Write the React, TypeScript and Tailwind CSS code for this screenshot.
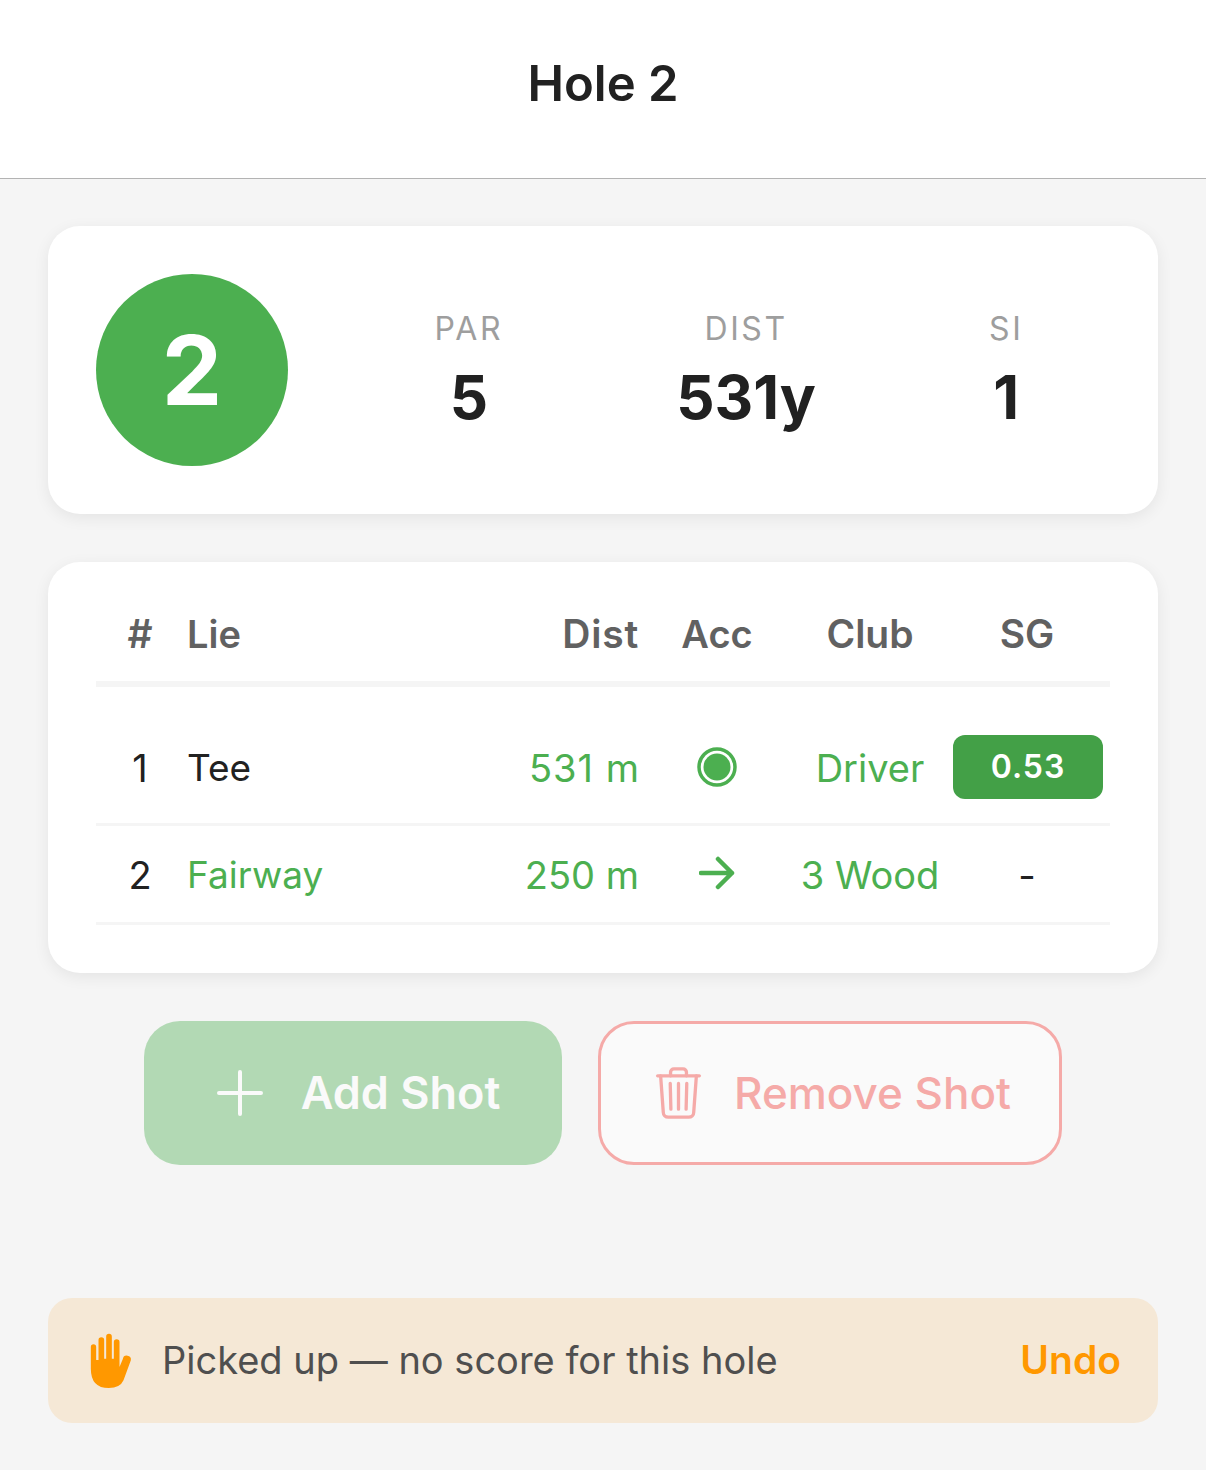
const rowClass = "grid grid-cols-[91px_1fr_90px_152px_160px_160px] items-center";

function TargetIcon() {
  return (
    <svg width="40" height="40" viewBox="0 0 40 40" fill="none" className="mx-auto">
      <circle cx="20" cy="20" r="18" stroke="#4caf50" strokeWidth="3.5" />
      <circle cx="20" cy="20" r="13.5" fill="#4caf50" />
    </svg>
  );
}

function ArrowIcon() {
  return (
    <svg width="36" height="34" viewBox="0 0 36 34" fill="none" className="mx-auto -mt-[5px]">
      <path
        d="M2 17H33M19 3l14 14-14 14"
        stroke="#4caf50"
        strokeWidth="4.5"
        strokeLinecap="round"
        strokeLinejoin="round"
      />
    </svg>
  );
}

function PlusIcon() {
  return (
    <svg width="46" height="46" viewBox="0 0 46 46" fill="none">
      <path d="M23 2V44M2 23H44" stroke="#fafafa" strokeWidth="4" strokeLinecap="round" />
    </svg>
  );
}

function TrashIcon() {
  return (
    <svg width="47" height="54" viewBox="196 168 142 162" fill="none">
      <g stroke="#f5aaa8" strokeWidth="10" strokeLinecap="round" strokeLinejoin="round">
        <path d="M204 197H330" />
        <path d="M243 197V186a10 10 0 0 1 10-10h28a10 10 0 0 1 10 10v11" />
        <path d="M213 197l8 110a15 15 0 0 0 15 15h62a15 15 0 0 0 15-15l8-110" />
        <path d="M242 220l2 78M267 220v78M292 220l-2 78" />
      </g>
    </svg>
  );
}

function HandIcon() {
  return (
    <svg width="43" height="56" viewBox="90 95 128 168">
      <path
        fill="#ff9800"
        d="M92 137a8 8 0 0 1 16 0V176h7V116a8.5 8.5 0 0 1 17 0V172h6V106a8.5 8.5 0 0 1 17 0V172h6V122a8.5 8.5 0 0 1 17 0V197l10-24a10 10 0 0 1 24 4q-2 6-22 60q-10 23-44 23q-54 0-54-58Z"
      />
    </svg>
  );
}

function Stat({ label, value }: { label: string; value: string }) {
  return (
    <div className="flex flex-col items-center">
      <span className="text-[32px] leading-[40px] tracking-[2.6px] text-[#9e9e9e]">{label}</span>
      <span className="mt-[14px] text-[60px] leading-[68px] font-bold text-[#212121]">{value}</span>
    </div>
  );
}

export default function App() {
  return (
    <div className="min-h-[1470px] bg-[#f5f5f5] font-['Inter',sans-serif]">
      <header className="h-[179px] flex items-center justify-center bg-white border-b border-[#b3b3b3] pb-[11px]">
        <h1 className="text-[49px] font-semibold text-[#212121]">Hole 2</h1>
      </header>

      <main className="px-12 pt-[47px]">
        <section className="flex items-center rounded-[32px] bg-white p-12 shadow-[0_4px_16px_rgba(0,0,0,0.07)]">
          <div className="w-[192px] h-[192px] shrink-0 rounded-full bg-[#4caf50] flex items-center justify-center text-[96px] font-bold text-white">
            2
          </div>
          <div className="flex-1 flex justify-around pl-[60px]">
            <Stat label="PAR" value="5" />
            <Stat label="DIST" value="531y" />
            <Stat label="SI" value="1" />
          </div>
        </section>

        <section className="mt-12 rounded-[32px] bg-white px-12 pt-6 pb-12 shadow-[0_4px_16px_rgba(0,0,0,0.07)]">
          <div className={`${rowClass} h-[101px] pt-[2px] border-b-[6px] border-[#f5f5f5] text-[39px] font-semibold text-[#616161]`}>
            <span className="text-center pr-[3px]">#</span>
            <span className="text-[38px]">Lie</span>
            <span className="text-right tracking-[0.8px] -mr-[1px]">Dist</span>
            <span className="text-center pl-[6px] text-[38px]">Acc</span>
            <span className="text-center">Club</span>
            <span className="text-center pr-[6px]">SG</span>
          </div>
          <div className={`${rowClass} h-[139px] pt-[26px] border-b-[3px] border-[#f5f5f5] text-[38px] text-[#4caf50]`}>
            <span className="text-center pr-[3px] text-[#212121]">1</span>
            <span className="text-[37px] text-[#212121]">Tee</span>
            <span className="text-right tracking-[1px] whitespace-nowrap justify-self-end -mr-[2px]">531 m</span>
            <span className="pl-[6px] -mt-[2px]"><TargetIcon /></span>
            <span className="text-center">Driver</span>
            <span className="w-[150px] h-[64px] -mt-[2px] justify-self-end mr-[7px] rounded-[12px] bg-[#43a047] text-white text-[32px] font-semibold tracking-[1px] flex items-center justify-center">
              0.53
            </span>
          </div>
          <div className={`${rowClass} h-[99px] pt-[2px] border-b-[3px] border-[#f5f5f5] text-[38px] text-[#4caf50]`}>
            <span className="text-center pr-[3px] text-[#212121]">2</span>
            <span className="text-[37px]">Fairway</span>
            <span className="text-right whitespace-nowrap justify-self-end -mr-[1px]">250 m</span>
            <span className="pl-[6px]"><ArrowIcon /></span>
            <span className="text-center whitespace-nowrap">3 Wood</span>
            <span className="text-center pr-[6px] text-[#212121]">-</span>
          </div>
        </section>

        <div className="mt-12 flex justify-center gap-9">
          <button className="w-[418px] h-[144px] pl-[11px] rounded-[36px] bg-[#b2d9b4] flex items-center justify-center gap-[38px] text-[45px] font-semibold text-[#fafafa]">
            <PlusIcon />
            Add Shot
          </button>
          <button className="w-[464px] h-[144px] pl-[6px] rounded-[36px] border-[3px] border-[#f5aaa8] bg-[#fafafa] flex items-center justify-center gap-[32px] text-[44px] font-medium text-[#f5aaa8]">
            <TrashIcon />
            Remove Shot
          </button>
        </div>

        <div className="mt-[133px] h-[125px] rounded-[24px] bg-[#f5e8d6] flex items-center pl-[42px] pr-[37px]">
          <HandIcon />
          <span className="ml-[29px] flex-1 text-[38px] text-[#4f4f4f]">Picked up — no score for this hole</span>
          <span className="text-[39px] font-semibold text-[#ff9800]">Undo</span>
        </div>
      </main>
    </div>
  );
}
